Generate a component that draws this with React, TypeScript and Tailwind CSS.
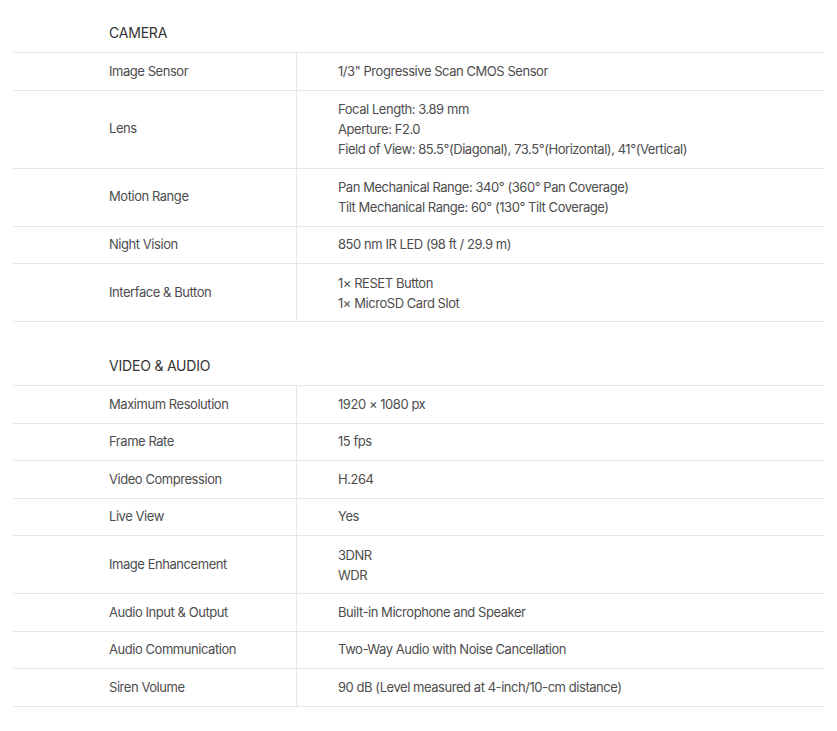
import React from "react";

type Row = { label: string; values: string[] };

const camera: Row[] = [
  { label: "Image Sensor", values: ['1/3" Progressive Scan CMOS Sensor'] },
  {
    label: "Lens",
    values: [
      "Focal Length: 3.89 mm",
      "Aperture: F2.0",
      "Field of View: 85.5°(Diagonal), 73.5°(Horizontal), 41°(Vertical)",
    ],
  },
  {
    label: "Motion Range",
    values: [
      "Pan Mechanical Range: 340° (360° Pan Coverage)",
      "Tilt Mechanical Range: 60° (130° Tilt Coverage)",
    ],
  },
  { label: "Night Vision", values: ["850 nm IR LED (98 ft / 29.9 m)"] },
  { label: "Interface & Button", values: ["1× RESET Button", "1× MicroSD Card Slot"] },
];

const video: Row[] = [
  { label: "Maximum Resolution", values: ["1920 × 1080 px"] },
  { label: "Frame Rate", values: ["15 fps"] },
  { label: "Video Compression", values: ["H.264"] },
  { label: "Live View", values: ["Yes"] },
  { label: "Image Enhancement", values: ["3DNR", "WDR"] },
  { label: "Audio Input & Output", values: ["Built-in Microphone and Speaker"] },
  { label: "Audio Communication", values: ["Two-Way Audio with Noise Cancellation"] },
  { label: "Siren Volume", values: ["90 dB (Level measured at 4-inch/10-cm distance)"] },
];

function Section({ title, rows, first }: { title: string; rows: Row[]; first?: boolean }) {
  return (
    <div className={first ? "" : "mt-[11px]"}>
      <div className="pl-[96px] pt-[23px] pb-[9px] text-[14px] leading-[20px] tracking-[-0.2px] text-[#333333]">
        {title}
      </div>
      <div className="border-t border-[#e6e6ec]">
        {rows.map((r) => (
          <div key={r.label} className="flex border-b border-[#e6e6ec]">
            <div className="w-[284px] shrink-0 flex items-center pl-[96px] border-r border-[#e6e6ec] text-[13px] leading-[19.5px] tracking-[-0.45px] text-[#4d4d4d]">
              {r.label}
            </div>
            <div
              className={`flex-1 pl-[41px] py-[8.5px] text-[13px] tracking-[-0.45px] text-[#4d4d4d] ${
                r.values.length > 1 ? "leading-[20px]" : "leading-[19.5px]"
              }`}
            >
              {r.values.map((v) => (
                <div key={v}>{v}</div>
              ))}
            </div>
          </div>
        ))}
      </div>
    </div>
  );
}

export default function App() {
  return (
    <div
      className="w-[837px] h-[731px] bg-white pl-[13px] pr-[13px]"
      style={{ fontFamily: "Inter, 'Noto Sans', sans-serif" }}
    >
      <Section title="CAMERA" rows={camera} first />
      <Section title="VIDEO & AUDIO" rows={video} />
    </div>
  );
}
